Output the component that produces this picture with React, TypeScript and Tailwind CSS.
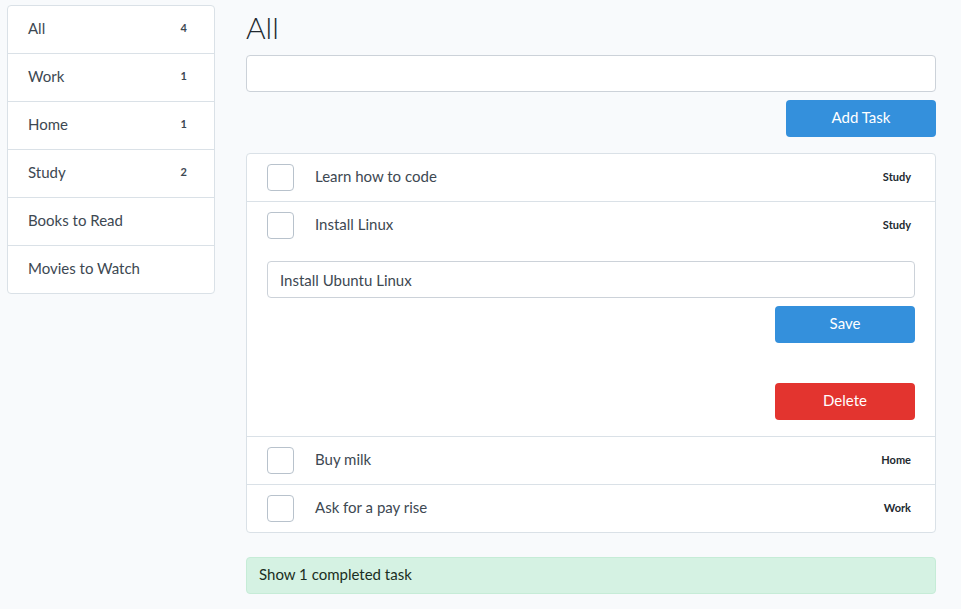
import React, { useState } from "react";

const categories = [
  { name: "All", count: 4 },
  { name: "Work", count: 1 },
  { name: "Home", count: 1 },
  { name: "Study", count: 2 },
  { name: "Books to Read" },
  { name: "Movies to Watch" },
];

const tasks = [
  { id: 1, title: "Learn how to code", tag: "Study" },
  { id: 2, title: "Install Linux", tag: "Study", note: "Install Ubuntu Linux" },
  { id: 3, title: "Buy milk", tag: "Home" },
  { id: 4, title: "Ask for a pay rise", tag: "Work" },
];

const Checkbox = () => (
  <div className="w-[27px] h-[27px] shrink-0 rounded border border-[#b8c2cc] bg-white" />
);

export default function App() {
  const [openId] = useState(2);
  const [newTask, setNewTask] = useState("");

  return (
    <div
      className="min-h-[609px] bg-[#f8fafc] text-[#3d4852] flex items-start pt-[5px] pl-[7px] pr-[25px] pb-4"
      style={{ fontFamily: "Lato, 'Noto Sans', sans-serif" }}
    >
      {/* Sidebar */}
      <div className="w-[208px] shrink-0 bg-white border border-[#dae1e7] rounded">
        {categories.map((c, i) => (
          <div
            key={c.name}
            className={
              "flex items-center justify-between pl-5 pr-[27px] text-[15px] pb-[2px] " +
              (i > 0 ? "h-[48px] border-t border-[#dae1e7]" : "h-[47px]")
            }
          >
            <span>{c.name}</span>
            {c.count !== undefined && (
              <span className="text-[11px] font-bold">{c.count}</span>
            )}
          </div>
        ))}
      </div>

      {/* Main */}
      <div className="flex-1 ml-[31px] flex flex-col">
        <h1 className="text-[30px] font-light text-[#22292f] leading-none mt-[7px] h-[43px]">All</h1>
        <input
          value={newTask}
          onChange={(e) => setNewTask(e.target.value)}
          className="h-[37px] bg-white border border-[#ccd2d9] rounded px-3 text-[15px] outline-none"
        />
        <div className="flex justify-end mt-2">
          <button className="w-[150px] h-[37px] rounded bg-[#3490dc] text-white text-[15px] pb-[2px]">
            Add Task
          </button>
        </div>

        <div className="mt-4 bg-white border border-[#dae1e7] rounded">
          {tasks.map((t, i) => (
            <div key={t.id} className={i > 0 ? "border-t border-[#dae1e7]" : ""}>
              <div className="h-[47px] flex items-center pl-5 pr-6">
                <Checkbox />
                <span className="ml-[21px] text-[15px] flex-1 pb-[2px]">{t.title}</span>
                <span className="text-[11px] font-bold text-[#22292f]">{t.tag}</span>
              </div>
              {openId === t.id && (
                <div className="px-5 pt-3 pb-4 flex flex-col">
                  <input
                    defaultValue={t.note}
                    className="h-[37px] bg-white border border-[#ccd2d9] rounded px-3 text-[15px] outline-none"
                  />
                  <div className="flex justify-end mt-2">
                    <button className="w-[140px] h-[37px] rounded bg-[#3490dc] text-white text-[15px] pb-[2px]">
                      Save
                    </button>
                  </div>
                  <div className="flex justify-end mt-10">
                    <button className="w-[140px] h-[37px] rounded bg-[#e3342f] text-white text-[15px] pb-[2px]">
                      Delete
                    </button>
                  </div>
                </div>
              )}
            </div>
          ))}
        </div>

        <div className="mt-6 h-[37px] flex items-center px-3 pb-[2px] bg-[#d5f2e3] border border-[#c6ecd7] rounded text-[15px] text-[#1a2e22]">
          Show 1 completed task
        </div>
      </div>
    </div>
  );
}
